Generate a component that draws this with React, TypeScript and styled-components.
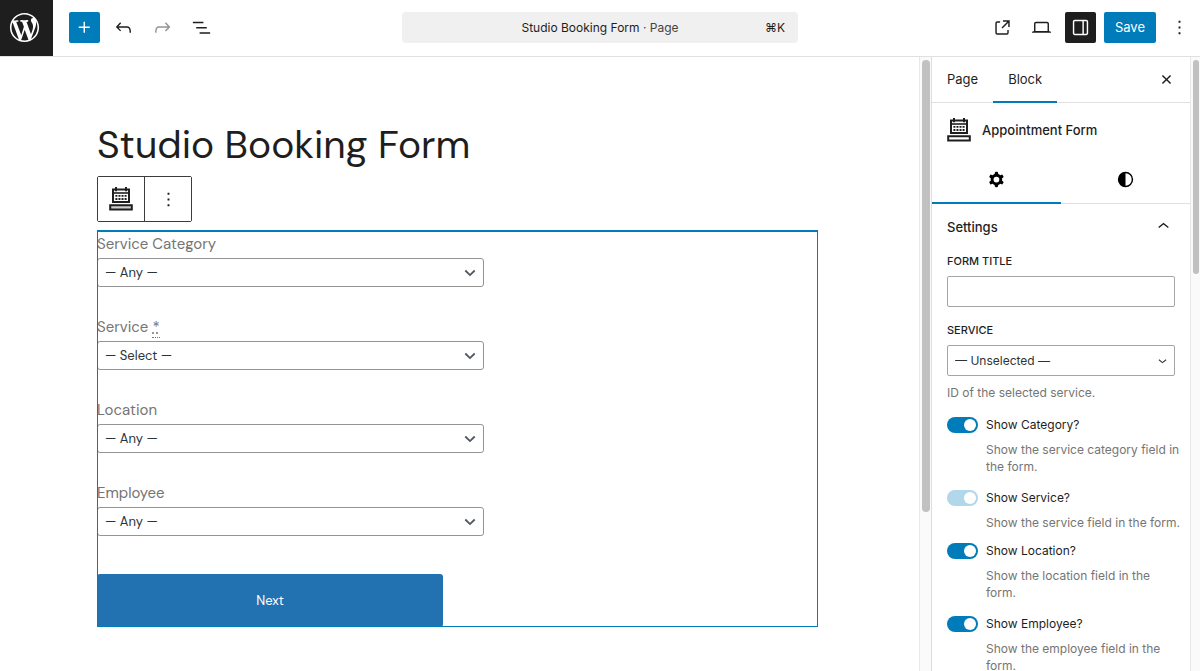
import React from 'react';
import styled, { createGlobalStyle, css } from 'styled-components';

const UI = "Inter, 'Liberation Sans', sans-serif";
const THEME = "'DM Sans', 'Inter', 'Liberation Sans', sans-serif";
const BLUE = '#007cba';
const INK = '#1e1e1e';
const MUTED = '#757575';

const Global = createGlobalStyle`
  *, *::before, *::after { box-sizing: border-box; }
  body { margin: 0; background: #fff; color: ${INK}; font-family: ${UI}; font-size: 13px; }
  button, input, select { font: inherit; color: inherit; }
`;

const Shell = styled.div`
  display: flex;
  flex-direction: column;
  height: 100vh;
  overflow: hidden;
`;

const Header = styled.header`
  display: grid;
  grid-template-columns: 1fr 33% 1fr;
  align-items: start;
  flex: none;
  height: 57px;
  border-bottom: 1px solid #e0e0e0;
`;

const HeaderGroup = styled.div<{ $end?: boolean }>`
  display: flex;
  align-items: center;
  gap: 8px;
  height: 54px;
  ${p => p.$end && css`justify-content: flex-end; padding-right: 5px;`}
`;

const SiteLink = styled.a`
  display: flex;
  align-items: center;
  justify-content: center;
  align-self: flex-start;
  width: 53px;
  height: 56px;
  margin-right: 8px;
  padding: 0 4px 2px 0;
  background: ${INK};
  color: #fff;
`;

const IconButton = styled.button<{ $tone?: 'primary' | 'pressed' }>`
  display: flex;
  align-items: center;
  justify-content: center;
  width: 31px;
  height: 31px;
  padding: 0;
  border: 0;
  border-radius: 2px;
  background: ${p => (p.$tone === 'primary' ? BLUE : p.$tone === 'pressed' ? INK : 'transparent')};
  color: ${p => (p.$tone ? '#fff' : INK)};
  &:disabled { color: #949494; }
`;

const SaveButton = styled.button`
  height: 31px;
  padding: 0 11px;
  border: 0;
  border-radius: 2px;
  background: ${BLUE};
  color: #fff;
`;

const CommandBar = styled.button`
  display: grid;
  grid-template-columns: 1fr auto 1fr;
  align-items: center;
  height: 31px;
  margin-top: 12px;
  padding: 0 13px;
  border: 0;
  border-radius: 4px;
  background: #f0f0f0;
  font-size: 12px;
`;

const CommandTitle = styled.span`
  grid-column: 2;
`;

const PageType = styled.span`
  color: #444;
`;

const Shortcut = styled.span`
  justify-self: end;
`;

const Body = styled.div`
  display: flex;
  flex: 1;
  min-height: 0;
`;

const Canvas = styled.main`
  flex: 1;
  min-width: 0;
  padding: 62px 101px 0 97px;
  overflow: hidden;
`;

const ScrollTrack = styled.div<{ $width: number }>`
  flex: none;
  width: ${p => p.$width}px;
  padding: 3px 1px 0 2px;
  border-left: 1px solid #e8e8e8;
  background: #fafafa;
`;

const ScrollThumb = styled.div<{ $size: number }>`
  height: ${p => p.$size}%;
  border-radius: 4px;
  background: #c1c1c1;
`;

const PostTitle = styled.h1`
  margin: 0;
  font-family: ${THEME};
  font-size: 39px;
  font-weight: 400;
  line-height: 52px;
`;

const BlockToolbar = styled.div`
  display: inline-flex;
  margin: 5px 0 8px;
  border: 1px solid #3c3c3c;
  border-radius: 2px;
  vertical-align: top;
`;

const ToolbarButton = styled.button`
  display: flex;
  align-items: center;
  justify-content: center;
  width: 46px;
  height: 44px;
  padding: 0;
  border: 0;
  background: #fff;
  & + & { width: 47px; border-left: 1px solid #3c3c3c; }
`;

const FormBlock = styled.form`
  position: relative;
  padding-top: 1px;
  font-family: ${THEME};
  &::after {
    content: '';
    position: absolute;
    inset: 0;
    border: solid ${BLUE};
    border-width: 2px 1px 1px;
    pointer-events: none;
  }
`;

const BookingField = styled.div`
  max-width: 387px;
  padding-bottom: 27px;
`;

const BookingLabel = styled.label`
  display: block;
  color: ${MUTED};
  font-size: 15px;
  line-height: 27px;
`;

const Required = styled.abbr`
  text-decoration: underline dotted;
  border-bottom: 1px dotted ${MUTED};
`;

const SelectWrap = styled.div`
  position: relative;
  color: #2c3338;
  svg {
    position: absolute;
    top: 0;
    bottom: 0;
    right: 4px;
    margin: auto;
    pointer-events: none;
  }
`;

const Select = styled.select<{ $panel?: boolean }>`
  display: block;
  appearance: none;
  width: 100%;
  height: ${p => (p.$panel ? 31 : 29)}px;
  padding: 0 24px 0 7px;
  border: 1px solid ${p => (p.$panel ? '#a5a5a5' : '#949494')};
  border-radius: ${p => (p.$panel ? 2 : 3)}px;
  background: #fff;
  font-size: ${p => (p.$panel ? 12 : 13)}px;
`;

const NextButton = styled.button`
  display: block;
  width: 100%;
  max-width: 346px;
  height: 53px;
  margin-top: 11px;
  border: 0;
  border-radius: 3px;
  background: #2271b1;
  color: #fff;
  font-size: 13px;
`;

const Sidebar = styled.aside`
  flex: none;
  width: 259px;
  border-left: 1px solid #ddd;
  overflow: hidden;
`;

const TabRow = styled.div`
  display: flex;
  align-items: center;
  height: 46px;
  padding-right: 8px;
  border-bottom: 1px solid #e0e0e0;
`;

const Tab = styled.button<{ $active?: boolean }>`
  align-self: stretch;
  margin-bottom: -1px;
  padding: 0 15px;
  border: 0;
  border-bottom: 2px solid ${p => (p.$active ? BLUE : 'transparent')};
  background: transparent;
`;

const CloseButton = styled(IconButton)`
  margin-left: auto;
`;

const BlockCard = styled.div`
  display: flex;
  align-items: center;
  gap: 11px;
  height: 54px;
  padding: 0 15px;
`;

const BlockName = styled.h2`
  margin: 0;
  font-size: 13px;
  font-weight: 500;
`;

const ViewTabs = styled.div`
  display: grid;
  grid-template-columns: 1fr 1fr;
  height: 47px;
  border-bottom: 1px solid #e0e0e0;
`;

const ViewTab = styled.button<{ $active?: boolean }>`
  display: flex;
  align-items: center;
  justify-content: center;
  margin-bottom: -1px;
  padding: 0;
  border: 0;
  border-bottom: 2px solid ${p => (p.$active ? BLUE : 'transparent')};
  background: transparent;
  color: #000;
`;

const Panel = styled.section`
  padding: 0 15px;
`;

const PanelToggle = styled.button`
  display: flex;
  align-items: center;
  justify-content: space-between;
  width: 100%;
  height: 45px;
  margin-bottom: 5px;
  padding: 0;
  border: 0;
  background: transparent;
  font-weight: 500;
`;

const Control = styled.div`
  margin-bottom: 16px;
`;

const ControlLabel = styled.label`
  display: block;
  margin-bottom: 7px;
  font-size: 11px;
  font-weight: 500;
  line-height: 15px;
  text-transform: uppercase;
`;

const TextInput = styled.input`
  display: block;
  width: 100%;
  height: 31px;
  padding: 0 7px;
  border: 1px solid #a5a5a5;
  border-radius: 2px;
`;

const Help = styled.p`
  margin: 8px 0 0;
  color: ${MUTED};
  font-size: 12px;
  line-height: 17px;
`;

const ToggleField = styled.div<{ $tight?: boolean }>`
  display: grid;
  grid-template-columns: 31px 1fr;
  column-gap: 8px;
  align-items: center;
  margin: 0 -6px ${p => (p.$tight ? 12 : 15)}px 0;
  ${Help} { grid-column: 2; }
`;

const Switch = styled.input`
  appearance: none;
  display: flex;
  justify-content: flex-end;
  width: 31px;
  height: 16px;
  margin: 0;
  padding: 2px;
  border-radius: 8px;
  background: ${BLUE};
  &::before {
    content: '';
    width: 12px;
    height: 12px;
    border-radius: 50%;
    background: #fff;
  }
  &:not(:checked) { justify-content: flex-start; background: #949494; }
  &:disabled { background: #b2d7ea; }
`;

const SwitchLabel = styled.label`
  font-size: 12px;
  line-height: 16px;
`;

const PATHS = {
  wordpress:
    'M20 10c0-5.51-4.49-10-10-10C4.48 0 0 4.49 0 10c0 5.52 4.48 10 10 10 5.51 0 10-4.48 10-10zM7.78 15.37L4.37 6.22c.55-.02 1.17-.08 1.17-.08.5-.06.44-1.13-.06-1.11 0 0-1.45.11-2.37.11-.18 0-.37 0-.58-.01C4.12 2.69 6.87 1.11 10 1.11c2.33 0 4.45.87 6.05 2.34-.68-.11-1.65.39-1.65 1.58 0 .74.45 1.36.9 2.1.35.61.55 1.36.55 2.46 0 1.49-1.4 5-1.4 5l-3.03-8.37c.54-.02.82-.17.82-.17.5-.05.44-1.25-.06-1.22 0 0-1.44.12-2.38.12-.87 0-2.33-.12-2.33-.12-.5-.03-.56 1.2-.06 1.22l.92.08 1.26 3.41zM17.41 10c.24-.64.74-1.87.43-4.25.7 1.29 1.05 2.71 1.05 4.25 0 3.29-1.73 6.24-4.4 7.78.97-2.59 1.94-5.2 2.92-7.78zM6.1 18.09C3.12 16.65 1.11 13.53 1.11 10c0-1.3.23-2.48.72-3.59C3.25 10.3 4.67 14.2 6.1 18.09zm4.03-6.63l2.58 6.98c-.86.29-1.76.45-2.71.45-.79 0-1.57-.11-2.29-.33.81-2.38 1.62-4.74 2.42-7.1z',
  plus: 'M11 12.5V17.5H12.5V12.5H17.5V11H12.5V6H11V11H6V12.5H11Z',
  undo: 'M18.3 11.7c-.6-.6-1.4-.9-2.3-.9H6.7l2.9-3.3-1.1-1-4.5 5L8.5 16l1-1-2.7-2.7H16c.5 0 .9.2 1.3.5 1 1 1 3.4 1 4.5v.3h1.5v-.2c0-1.5 0-4.3-1.5-5.7z',
  redo: 'M15.6 6.5l-1.1 1 2.9 3.3H8c-.9 0-1.7.3-2.3.9-1.4 1.5-1.4 4.2-1.4 5.6v.2h1.5v-.3c0-1.1 0-3.5 1-4.5.3-.3.7-.5 1.3-.5h9.2L14.5 15l1.1 1.1 4.6-4.6-4.6-5z',
  list: 'M3 6h11v1.5H3V6Zm3.5 5.5h11V13h-11v-1.5ZM21 17H10v1.5h11V17Z',
  external:
    'M19.5 4.5h-7V6h4.44l-5.97 5.97 1.06 1.06L18 7.06v4.44h1.5v-7Zm-13 1a2 2 0 0 0-2 2v10a2 2 0 0 0 2 2h10a2 2 0 0 0 2-2v-3H17v3a.5.5 0 0 1-.5.5h-10a.5.5 0 0 1-.5-.5v-10a.5.5 0 0 1 .5-.5h3V5.5h-3Z',
  desktop:
    'M20.5 16h-.7V8c0-1.1-.9-2-2-2H6.2c-1.1 0-2 .9-2 2v8h-.7c-.8 0-1.5.7-1.5 1.5h20c0-.8-.7-1.5-1.5-1.5zM5.7 8c0-.3.2-.5.5-.5h11.6c.3 0 .5.2.5.5v7.6H5.7V8z',
  drawer:
    'M18 4H6c-1.1 0-2 .9-2 2v12c0 1.1.9 2 2 2h12c1.1 0 2-.9 2-2V6c0-1.1-.9-2-2-2zm-4 14.5H6c-.3 0-.5-.2-.5-.5V6c0-.3.2-.5.5-.5h8v13zm4.5-.5c0 .3-.2.5-.5.5h-2.5v-13H18c.3 0 .5.2.5.5v12z',
  more: 'M13 19h-2v-2h2v2zm0-6h-2v-2h2v2zm0-6h-2V5h2v2z',
  close:
    'M12 13.06l3.712 3.713 1.061-1.06L13.061 12l3.712-3.712-1.06-1.06L12 10.938 8.288 7.227l-1.061 1.06L10.939 12l-3.712 3.712 1.06 1.061L12 13.061z',
  chevronUp: 'M6.5 12.4L12 8l5.5 4.4-.9 1.2L12 10l-4.5 3.6-1-1.2z',
  chevronDown: 'M17.5 11.6L12 16l-5.5-4.4.9-1.2L12 14l4.5-3.6 1 1.2z',
  cog: 'M10.289 4.836A1 1 0 0111.275 4h1.306a1 1 0 01.987.836l.244 1.466c.787.26 1.503.679 2.108 1.218l1.393-.522a1 1 0 011.216.437l.653 1.13a1 1 0 01-.23 1.273l-1.148.944a6.025 6.025 0 010 2.435l1.149.946a1 1 0 01.23 1.272l-.653 1.13a1 1 0 01-1.216.437l-1.394-.522c-.605.54-1.32.958-2.108 1.218l-.244 1.466a1 1 0 01-.987.836h-1.306a1 1 0 01-.986-.836l-.244-1.466a5.995 5.995 0 01-2.108-1.218l-1.394.522a1 1 0 01-1.217-.436l-.653-1.131a1 1 0 01.23-1.272l1.149-.946a6.026 6.026 0 010-2.435l-1.148-.944a1 1 0 01-.23-1.272l.653-1.131a1 1 0 011.217-.437l1.393.522a5.994 5.994 0 012.108-1.218l.244-1.466zM14.929 12a3 3 0 11-6 0 3 3 0 016 0z',
  styles: 'M20 12a8 8 0 1 1-16 0 8 8 0 0 1 16 0Zm-1.5 0a6.5 6.5 0 0 1-6.5 6.5v-13a6.5 6.5 0 0 1 6.5 6.5Z',
};

function Icon({ name, size = 23, box = '0 0 24 24' }: { name: keyof typeof PATHS; size?: number; box?: string }) {
  return (
    <svg width={size} height={size} viewBox={box} fill="currentColor" fillRule="evenodd" aria-hidden="true">
      <path d={PATHS[name]} />
    </svg>
  );
}

function AppointmentIcon({ baseFill = 'none' }: { baseFill?: string }) {
  return (
    <svg width="24" height="24" viewBox="0 0 24 24" fill="none" stroke="currentColor" aria-hidden="true">
      <path d="M4 2.5h16v12.5H4z" strokeWidth="2" />
      <path d="M4 6h16" strokeWidth="1.6" />
      <path d="M7 0v4.2M17 0v4.2" strokeWidth="2" />
      <path d="M6.4 8.9h11.2M6.4 12h11.2" strokeWidth="1.9" strokeDasharray="2 1.06" />
      <path d="M1.2 18.2h21.6v4.2H1.2z" strokeWidth="2" fill={baseFill} />
    </svg>
  );
}

const ChevronThin = () => (
  <svg width="20" height="20" viewBox="0 0 20 20" fill="none" stroke="#50575e" strokeWidth="1.8" aria-hidden="true">
    <path d="M5.3 7.5l4.7 4.6 4.7-4.6" />
  </svg>
);

const bookingFields = [
  { id: 'category', label: 'Service Category', value: '— Any —' },
  { id: 'service', label: 'Service', value: '— Select —', required: true },
  { id: 'location', label: 'Location', value: '— Any —' },
  { id: 'employee', label: 'Employee', value: '— Any —' },
];

const toggles = [
  { id: 'show-category', label: 'Show Category?', help: 'Show the service category field in the form.' },
  { id: 'show-service', label: 'Show Service?', help: 'Show the service field in the form.', locked: true },
  { id: 'show-location', label: 'Show Location?', help: 'Show the location field in the form.' },
  { id: 'show-employee', label: 'Show Employee?', help: 'Show the employee field in the form.' },
];

export default function App() {
  return (
    <Shell>
      <Global />
      <Header>
        <HeaderGroup>
          <SiteLink href="#" aria-label="View Pages"><Icon name="wordpress" size={35} box="-2 -2 24 24" /></SiteLink>
          <IconButton $tone="primary" aria-label="Add block"><Icon name="plus" /></IconButton>
          <IconButton aria-label="Undo"><Icon name="undo" /></IconButton>
          <IconButton aria-label="Redo" disabled><Icon name="redo" /></IconButton>
          <IconButton aria-label="Document overview"><Icon name="list" /></IconButton>
        </HeaderGroup>
        <CommandBar>
          <CommandTitle>Studio Booking Form <PageType>· Page</PageType></CommandTitle>
          <Shortcut>⌘K</Shortcut>
        </CommandBar>
        <HeaderGroup $end>
          <IconButton aria-label="View page"><Icon name="external" /></IconButton>
          <IconButton aria-label="Preview"><Icon name="desktop" /></IconButton>
          <IconButton $tone="pressed" aria-label="Settings"><Icon name="drawer" /></IconButton>
          <SaveButton>Save</SaveButton>
          <IconButton aria-label="Options"><Icon name="more" /></IconButton>
        </HeaderGroup>
      </Header>
      <Body>
        <Canvas>
          <PostTitle>Studio Booking Form</PostTitle>
          <BlockToolbar>
            <ToolbarButton aria-label="Appointment Form"><AppointmentIcon baseFill="#ccd0d4" /></ToolbarButton>
            <ToolbarButton aria-label="Options"><Icon name="more" /></ToolbarButton>
          </BlockToolbar>
          <FormBlock onSubmit={e => e.preventDefault()}>
            {bookingFields.map(f => (
              <BookingField key={f.id}>
                <BookingLabel htmlFor={f.id}>
                  {f.label}{f.required && <> <Required title="Required">*</Required></>}
                </BookingLabel>
                <SelectWrap>
                  <Select id={f.id}><option>{f.value}</option></Select>
                  <ChevronThin />
                </SelectWrap>
              </BookingField>
            ))}
            <NextButton type="submit">Next</NextButton>
          </FormBlock>
        </Canvas>
        <ScrollTrack $width={12}><ScrollThumb $size={74} /></ScrollTrack>
        <Sidebar>
          <TabRow>
            <Tab>Page</Tab>
            <Tab $active>Block</Tab>
            <CloseButton aria-label="Close settings"><Icon name="close" /></CloseButton>
          </TabRow>
          <BlockCard>
            <AppointmentIcon />
            <BlockName>Appointment Form</BlockName>
          </BlockCard>
          <ViewTabs>
            <ViewTab $active aria-label="Settings"><Icon name="cog" /></ViewTab>
            <ViewTab aria-label="Styles"><Icon name="styles" /></ViewTab>
          </ViewTabs>
          <Panel>
            <PanelToggle>Settings<Icon name="chevronUp" /></PanelToggle>
            <Control>
              <ControlLabel htmlFor="form-title">Form title</ControlLabel>
              <TextInput id="form-title" type="text" />
            </Control>
            <Control>
              <ControlLabel htmlFor="service-id">Service</ControlLabel>
              <SelectWrap>
                <Select id="service-id" $panel><option>— Unselected —</option></Select>
                <Icon name="chevronDown" size={17} />
              </SelectWrap>
              <Help>ID of the selected service.</Help>
            </Control>
            {toggles.map(t => (
              <ToggleField key={t.id} $tight={t.locked}>
                <Switch type="checkbox" id={t.id} defaultChecked disabled={t.locked} />
                <SwitchLabel htmlFor={t.id}>{t.label}</SwitchLabel>
                <Help>{t.help}</Help>
              </ToggleField>
            ))}
          </Panel>
        </Sidebar>
        <ScrollTrack $width={10}><ScrollThumb $size={35} /></ScrollTrack>
      </Body>
    </Shell>
  );
}
